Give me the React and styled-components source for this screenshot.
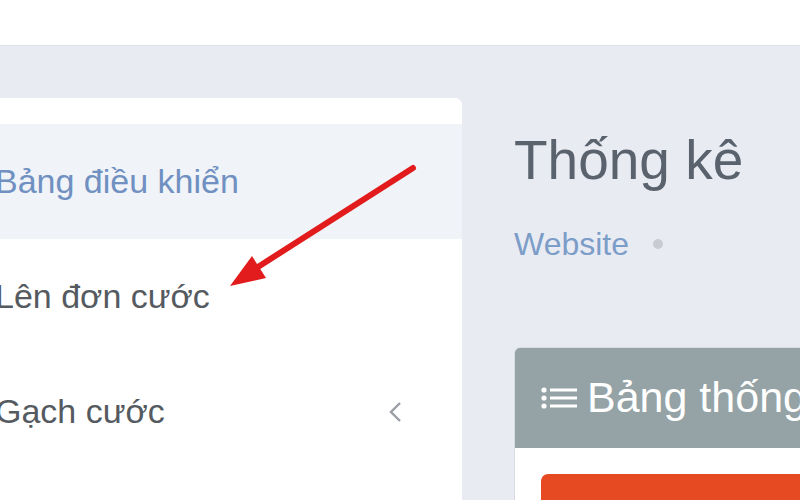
import styled, { createGlobalStyle } from "styled-components";

const Global = createGlobalStyle`
  html, body {
    margin: 0;
    padding: 0;
    background: #e9ebf2;
    font-family: "Liberation Sans", Arial, sans-serif;
    overflow: hidden;
  }
`;

export default function App() {
  return (
    <Page>
      <Global />
      <TopBar />
      <Main>
        <Sidebar>
          <NavItem $active>Bảng điều khiển</NavItem>
          <NavItem>Lên đơn cước</NavItem>
          <NavItem>
            Gạch cước
            <Chevron viewBox="0 0 16 22">
              <polyline points="12,2 3,11 12,20" />
            </Chevron>
          </NavItem>
        </Sidebar>
        <Content>
          <Title>Thống kê</Title>
          <Crumbs>
            <CrumbLink>Website</CrumbLink>
            <Dot />
          </Crumbs>
          <Panel>
            <PanelHead>
              <ListIcon viewBox="0 0 36 22">
                <circle cx="3" cy="3" r="2.6" />
                <circle cx="3" cy="11" r="2.6" />
                <circle cx="3" cy="19" r="2.6" />
                <rect x="9" y="1.5" width="27" height="3" />
                <rect x="9" y="9.5" width="27" height="3" />
                <rect x="9" y="17.5" width="27" height="3" />
              </ListIcon>
              Bảng thống kê
            </PanelHead>
            <PanelBody>
              <OrangeBox />
            </PanelBody>
          </Panel>
        </Content>
      </Main>
      <Arrow viewBox="0 0 800 500">
        <line x1="413" y1="168" x2="250" y2="272" />
        <polygon points="230,286 252,256 266,278" />
      </Arrow>
    </Page>
  );
}

const Page = styled.div`
  position: relative;
  width: 800px;
  height: 500px;
  overflow: hidden;
`;

const TopBar = styled.div`
  height: 45px;
  background: #fff;
  border-bottom: 1px solid #dfe1e7;
`;

const Main = styled.div`
  display: flex;
  padding-top: 52px;
  gap: 52px;
`;

const Sidebar = styled.div`
  width: 490px;
  margin-left: -28px;
  flex-shrink: 0;
  background: #fff;
  border-radius: 0 7px 0 0;
  padding-top: 26px;
  height: 420px;
`;

const NavItem = styled.div`
  height: 115px;
  display: flex;
  align-items: center;
  justify-content: space-between;
  padding: 0 58px 0 23px;
  font-size: 34px;
  color: ${(p) => (p.$active ? "#6f90c0" : "#555a60")};
  background: ${(p) => (p.$active ? "#f0f3f8" : "#fff")};
`;

const Chevron = styled.svg`
  width: 16px;
  height: 22px;
  fill: none;
  stroke: #9a9ea4;
  stroke-width: 2.4;
`;

const Content = styled.div`
  flex: 1;
  min-width: 0;
`;

const Title = styled.h1`
  margin: 32px 0 0;
  font-size: 55px;
  font-weight: 400;
  line-height: 1.1;
  color: #5a636d;
`;

const Crumbs = styled.div`
  display: flex;
  align-items: center;
  gap: 24px;
  margin-top: 34px;
  font-size: 32px;
  line-height: 1.2;
`;

const CrumbLink = styled.span`
  color: #7c9dc8;
`;

const Dot = styled.span`
  width: 10px;
  height: 10px;
  border-radius: 50%;
  background: #c8cbd2;
`;

const Panel = styled.div`
  margin-top: 84px;
  width: 400px;
  border: 1px solid #d8dce0;
  border-radius: 6px 0 0 0;
  overflow: hidden;
  background: #fff;
`;

const PanelHead = styled.div`
  height: 100px;
  background: #95a3a6;
  display: flex;
  align-items: center;
  gap: 10px;
  padding-left: 26px;
  color: #fff;
  font-size: 43px;
  white-space: nowrap;
`;

const ListIcon = styled.svg`
  width: 36px;
  height: 22px;
  fill: #fff;
  flex-shrink: 0;
`;

const PanelBody = styled.div`
  padding: 26px 0 0 26px;
`;

const OrangeBox = styled.div`
  height: 80px;
  background: #e64a23;
  border-radius: 7px 0 0 0;
`;

const Arrow = styled.svg`
  position: absolute;
  inset: 0;
  width: 800px;
  height: 500px;
  pointer-events: none;
  line {
    stroke: #e21c1c;
    stroke-width: 6;
    stroke-linecap: round;
  }
  polygon {
    fill: #e21c1c;
  }
`;
